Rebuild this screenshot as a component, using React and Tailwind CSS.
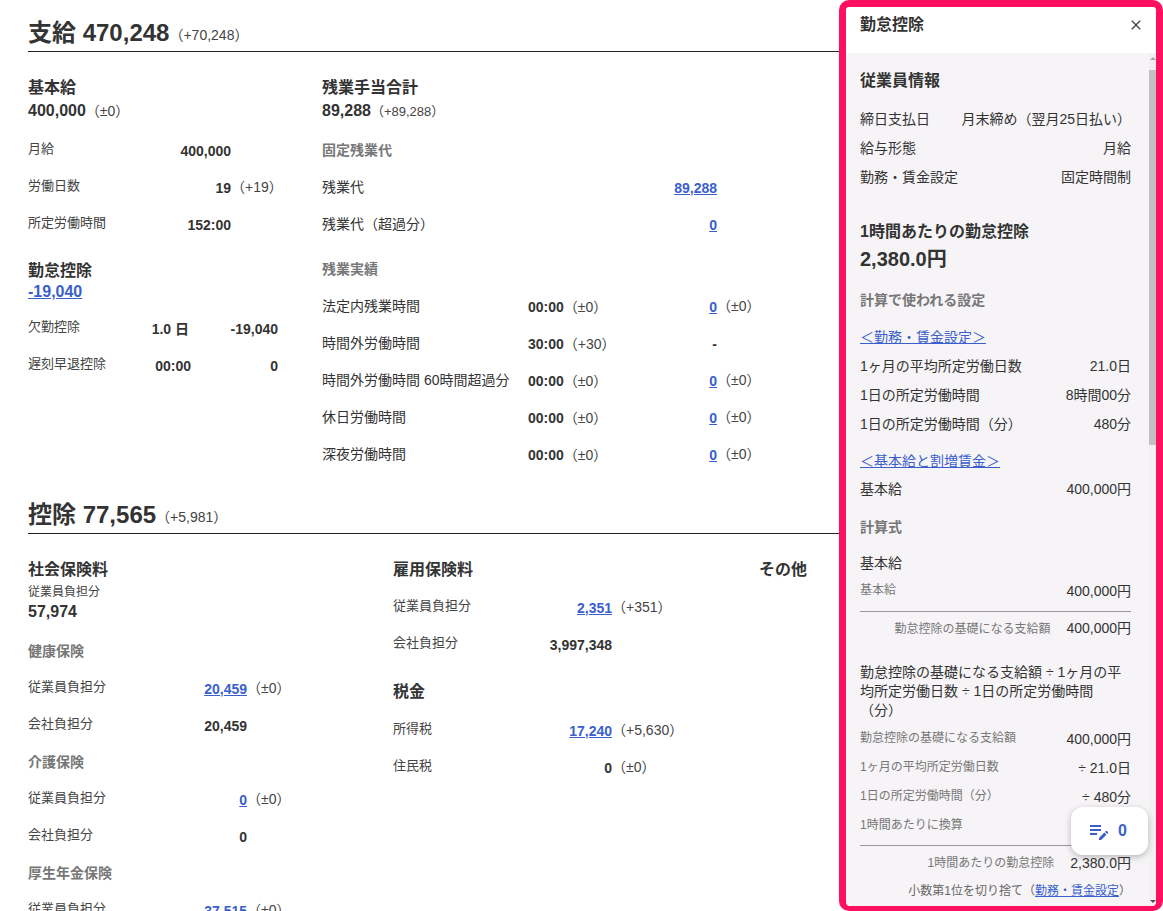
import React from "react";
import { MdClose, MdEditNote } from "react-icons/md";

const Delta = ({ children, className = "text-[14px]" }) => (
  <span className={`font-normal text-[#444] ${className}`}>（{children}）</span>
);

const Num = ({ link, children }) =>
  link ? (
    <a className="text-[14px] font-bold text-[#3a5fcd] underline">{children}</a>
  ) : (
    <span className="text-[14px] font-bold text-[#333]">{children}</span>
  );

// label / right aligned value / delta
function Row({ label, value, link, delta, cols }) {
  return (
    <div className={`grid h-[37px] items-center ${cols}`}>
      <span className="-translate-y-[2px] text-[13px] text-[#444]">{label}</span>
      <span className="text-right">
        <Num link={link}>{value}</Num>
      </span>
      {delta ? <Delta>{delta}</Delta> : <span />}
    </div>
  );
}

function OvertimeRow({ label, time, timeDelta, value, delta }) {
  return (
    <div className="grid h-[37px] grid-cols-[206px_122px_67px_90px] items-center">
      <span className="text-[14px] text-[#333]">{label}</span>
      {time ? (
        <span className="whitespace-nowrap">
          <Num>{time}</Num>
          <Delta>{timeDelta}</Delta>
        </span>
      ) : (
        <span />
      )}
      <span className="text-right">
        {value === "-" ? <Num>-</Num> : <Num link>{value}</Num>}
      </span>
      {delta ? <Delta>{delta}</Delta> : <span />}
    </div>
  );
}

const SubHead = ({ children, className = "" }) => (
  <h4 className={`text-[14px] font-bold text-[#777] ${className}`}>{children}</h4>
);

const Head = ({ children, className = "" }) => (
  <h3 className={`text-[16px] leading-[20px] font-bold text-[#333] ${className}`}>{children}</h3>
);

const SectionTitle = ({ title, delta, className = "" }) => (
  <div className={`flex h-[36px] items-center border-b border-[#222] pb-[2px] ${className}`}>
    <span className="text-[24px] font-bold text-[#333]">{title}</span>
    <span className="mt-[5px] text-[14px] text-[#444]">（{delta}）</span>
  </div>
);

function Payment() {
  const basic = "grid-cols-[120px_83px_auto]";
  return (
    <section>
      <SectionTitle title="支給 470,248" delta="+70,248" className="mt-[16px]" />
      <div className="flex pt-[26px]">
        <div className="w-[294px] shrink-0">
          <Head>基本給</Head>
          <p className="mt-[3px] text-[16px] leading-[20px] font-bold text-[#333]">
            400,000<Delta>±0</Delta>
          </p>
          <div className="mt-[11px]">
            <Row label="月給" value="400,000" cols={basic} />
            <Row label="労働日数" value="19" delta="+19" cols={basic} />
            <Row label="所定労働時間" value="152:00" cols={basic} />
          </div>
          <Head className="mt-[18px]">勤怠控除</Head>
          <a className="block text-[16px] leading-[22px] font-bold text-[#3a5fcd] underline">-19,040</a>
          <div className="mt-[7px]">
            <div className="grid h-[37px] w-[250px] grid-cols-[100px_61px_89px] items-center">
              <span className="-translate-y-[2px] text-[13px] text-[#444]">欠勤控除</span>
              <span className="text-right"><Num>1.0 日</Num></span>
              <span className="text-right"><Num>-19,040</Num></span>
            </div>
            <div className="grid h-[37px] w-[250px] grid-cols-[100px_63px_87px] items-center">
              <span className="-translate-y-[2px] text-[13px] text-[#444]">遅刻早退控除</span>
              <span className="text-right"><Num>00:00</Num></span>
              <span className="text-right"><Num>0</Num></span>
            </div>
          </div>
        </div>
        <div>
          <Head>残業手当合計</Head>
          <p className="mt-[3px] text-[16px] leading-[20px] font-bold text-[#333]">
            89,288<Delta className="text-[13px]">+89,288</Delta>
          </p>
          <SubHead className="mt-[18px]">固定残業代</SubHead>
          <div className="mt-[8px]">
            <OvertimeRow label="残業代" value="89,288" />
            <OvertimeRow label="残業代（超過分）" value="0" />
          </div>
          <SubHead className="mt-[16px]">残業実績</SubHead>
          <div className="mt-[8px]">
            <OvertimeRow label="法定内残業時間" time="00:00" timeDelta="±0" value="0" delta="±0" />
            <OvertimeRow label="時間外労働時間" time="30:00" timeDelta="+30" value="-" />
            <OvertimeRow label="時間外労働時間 60時間超過分" time="00:00" timeDelta="±0" value="0" delta="±0" />
            <OvertimeRow label="休日労働時間" time="00:00" timeDelta="±0" value="0" delta="±0" />
            <OvertimeRow label="深夜労働時間" time="00:00" timeDelta="±0" value="0" delta="±0" />
          </div>
        </div>
      </div>
    </section>
  );
}

function Deduction() {
  const cols = "grid-cols-[140px_79px_auto]";
  return (
    <section className="mt-[25px]">
      <SectionTitle title="控除 77,565" delta="+5,981" />
      <div className="flex pt-[26px]">
        <div className="w-[365px] shrink-0">
          <Head>社会保険料</Head>
          <p className="mt-[3px] text-[12px] leading-[18px] text-[#444]">従業員負担分</p>
          <p className="text-[16px] leading-[22px] font-bold text-[#333]">57,974</p>
          <SubHead className="mt-[18px]">健康保険</SubHead>
          <div className="mt-[8px]">
            <Row label="従業員負担分" value="20,459" link delta="±0" cols={cols} />
            <Row label="会社負担分" value="20,459" cols={cols} />
          </div>
          <SubHead className="mt-[8px]">介護保険</SubHead>
          <div className="mt-[8px]">
            <Row label="従業員負担分" value="0" link delta="±0" cols={cols} />
            <Row label="会社負担分" value="0" cols={cols} />
          </div>
          <SubHead className="mt-[8px]">厚生年金保険</SubHead>
          <div className="mt-[8px]">
            <Row label="従業員負担分" value="37,515" link delta="±0" cols={cols} />
          </div>
        </div>
        <div className="w-[366px] shrink-0">
          <Head>雇用保険料</Head>
          <div className="mt-[9px]">
            <Row label="従業員負担分" value="2,351" link delta="+351" cols={cols} />
            <Row label="会社負担分" value="3,997,348" cols={cols} />
          </div>
          <Head className="mt-[19px]">税金</Head>
          <div className="mt-[10px]">
            <Row label="所得税" value="17,240" link delta="+5,630" cols={cols} />
            <Row label="住民税" value="0" delta="±0" cols={cols} />
          </div>
        </div>
        <Head>その他</Head>
      </div>
    </section>
  );
}

const PanelRow = ({ label, value, small }) => (
  <div className="flex h-[29px] items-center justify-between whitespace-nowrap text-[14px] text-[#333]">
    <span className={small ? "-translate-y-[2px] text-[12px] text-[#777]" : ""}>{label}</span>
    <span>{value}</span>
  </div>
);

function AttendancePanel() {
  return (
    <aside className="absolute top-0 right-0 flex h-[911px] w-[324px] flex-col overflow-hidden rounded-[10px] border-[7px] border-b-[5px] border-[#ff0f5f] bg-white">
      <header className="flex h-[46px] shrink-0 items-start justify-between pt-[7px] pr-[12px] pl-[14px]">
        <span className="text-[16px] leading-[22px] font-bold text-[#333]">勤怠控除</span>
        <MdClose className="mt-[3px] text-[16px] text-[#444]" />
      </header>
      <div className="relative flex-1 overflow-hidden bg-[#f6f4f6] pr-[25px] pl-[14px]">
        <Head className="mt-[18px]">従業員情報</Head>
        <div className="mt-[14px]">
          <PanelRow label="締日支払日" value="月末締め（翌月25日払い）" />
          <PanelRow label="給与形態" value="月給" />
          <PanelRow label="勤務・賃金設定" value="固定時間制" />
        </div>
        <Head className="mt-[30px]">1時間あたりの勤怠控除</Head>
        <p className="mt-[3px] text-[20px] leading-[28px] font-bold text-[#333]">2,380.0円</p>
        <SubHead className="mt-[17px] leading-[20px]">計算で使われる設定</SubHead>
        <a className="mt-[17px] block text-[14px] leading-[20px] text-[#3a5fcd] underline">＜勤務・賃金設定＞</a>
        <div className="mt-[5px]">
          <PanelRow label="1ヶ月の平均所定労働日数" value="21.0日" />
          <PanelRow label="1日の所定労働時間" value="8時間00分" />
          <PanelRow label="1日の所定労働時間（分）" value="480分" />
        </div>
        <a className="mt-[12px] block text-[14px] leading-[20px] text-[#3a5fcd] underline">＜基本給と割増賃金＞</a>
        <div className="mt-[4px]">
          <PanelRow label="基本給" value="400,000円" />
        </div>
        <SubHead className="mt-[13px] leading-[20px]">計算式</SubHead>
        <p className="mt-[16px] text-[14px] leading-[20px] text-[#333]">基本給</p>
        <div className="mt-[4px] border-b border-[#999] pb-[5px]">
          <PanelRow label="基本給" value="400,000円" small />
        </div>
        <div className="flex h-[33px] items-center justify-end gap-[16px] text-[14px] text-[#333]">
          <span className="text-[12px] text-[#777]">勤怠控除の基礎になる支給額</span>
          <span>400,000円</span>
        </div>
        <p className="mt-[18px] text-[14px] leading-[19px] text-[#333]">
          勤怠控除の基礎になる支給額 ÷ 1ヶ月の平
          <br />
          均所定労働日数 ÷ 1日の所定労働時間
          <br />
          （分）
        </p>
        <div className="mt-[5px] border-b border-[#999] pb-[4px]">
          <PanelRow label="勤怠控除の基礎になる支給額" value="400,000円" small />
          <PanelRow label="1ヶ月の平均所定労働日数" value="÷ 21.0日" small />
          <PanelRow label="1日の所定労働時間（分）" value="÷ 480分" small />
          <PanelRow label="1時間あたりに換算" value="" small />
        </div>
        <div className="flex h-[34px] items-center justify-end gap-[16px] text-[14px] text-[#333]">
          <span className="text-[12px] text-[#777]">1時間あたりの勤怠控除</span>
          <span>2,380.0円</span>
        </div>
        <p className="mt-[2px] text-right text-[12px] leading-[18px] text-[#666]">
          小数第1位を切り捨て（<a className="text-[#3a5fcd] underline">勤務・賃金設定</a>）
        </p>
        <div className="absolute top-0 right-0 bottom-0 w-[7px] bg-[#f1f1f1]">
          <div className="mx-auto mt-[4px] h-0 w-0 border-x-[3px] border-b-[3px] border-x-transparent border-b-[#a3a3a3]" />
          <div className="mt-[10px] h-[375px] bg-[#c1c1c1]" />
          <div className="absolute right-0 bottom-[3px] left-0 mx-auto h-0 w-0 border-x-[3px] border-t-[3px] border-x-transparent border-t-[#505050]" />
        </div>
      </div>
      <button className="absolute top-[800px] right-[8px] flex h-[48px] w-[77px] items-center gap-[7px] rounded-[12px] bg-white pl-[16px] shadow-[0_2px_6px_rgba(0,0,0,0.25)]">
        <MdEditNote className="text-[24px] text-[#3a5fcd]" />
        <span className="text-[16px] font-bold text-[#3a5fcd]">0</span>
      </button>
    </aside>
  );
}

export default function App() {
  return (
    <div className="relative h-[911px] w-[1163px] overflow-hidden bg-white px-[28px] font-['Liberation_Sans','Noto_Sans_CJK_JP',sans-serif]">
      <Payment />
      <Deduction />
      <AttendancePanel />
    </div>
  );
}
